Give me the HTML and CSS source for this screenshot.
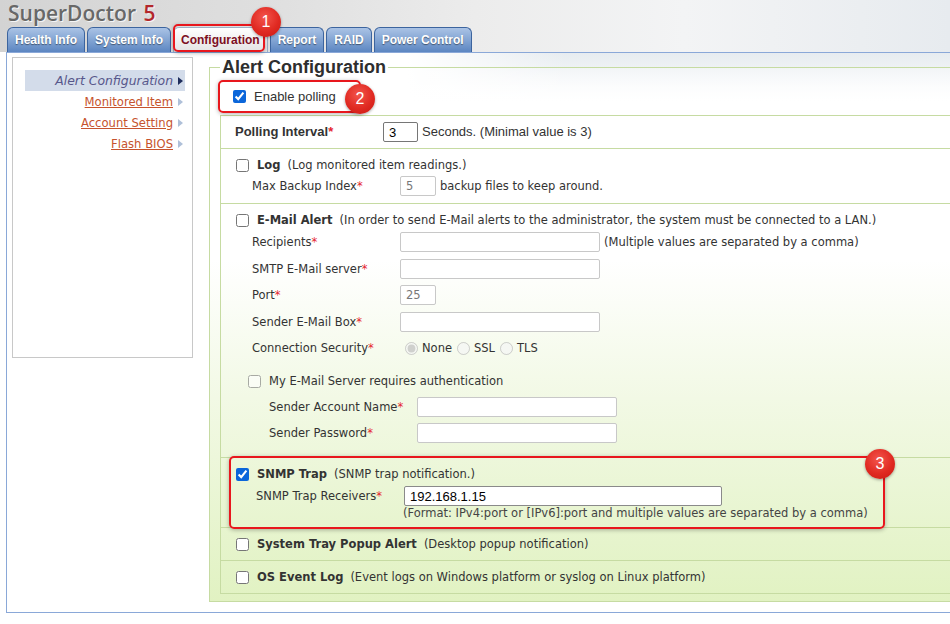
FILE: index.html
```html
<!DOCTYPE html>
<html lang="en">
<head>
    <meta charset="utf-8">
    <title>SuperDoctor 5 - Alert Configuration</title>
    <link rel="stylesheet" href="styles.css">
</head>
<body>
    <header class="top">
        <div class="brand">SuperDoctor <span class="brand-ver">5</span></div>
        <nav class="tabs">
            <a class="tab" href="#">Health Info</a>
            <a class="tab" href="#">System Info</a>
            <a class="tab tab-active" href="#">Configuration
                <span class="callout callout-tab"></span>
                <span class="badge badge-tab">1</span>
            </a>
            <a class="tab" href="#">Report</a>
            <a class="tab" href="#">RAID</a>
            <a class="tab" href="#">Power Control</a>
        </nav>
    </header>

    <div class="frame">
        <aside class="sidebar">
            <ul class="side-menu">
                <li class="side-item side-item-active"><a href="#">Alert Configuration</a><span class="side-arrow"></span></li>
                <li class="side-item"><a href="#">Monitored Item</a><span class="side-arrow"></span></li>
                <li class="side-item"><a href="#">Account Setting</a><span class="side-arrow"></span></li>
                <li class="side-item"><a href="#">Flash BIOS</a><span class="side-arrow"></span></li>
            </ul>
        </aside>

        <div class="panel">
            <fieldset class="alert-config">
                <legend>Alert Configuration</legend>

                <label class="poll-toggle">
                    <input type="checkbox" class="check" checked>
                    <span>Enable polling</span>
                    <span class="callout callout-poll"></span>
                    <span class="badge badge-poll">2</span>
                </label>

                <div class="alert-list">
                    <div class="alert-row poll-row">
                        <span class="field-label">Polling Interval<em class="req">*</em></span>
                        <input type="text" class="text-input poll-input" value="3">
                        <span class="poll-note">Seconds. (Minimal value is 3)</span>
                    </div>

                    <div class="alert-row">
                        <label class="row-title">
                            <input type="checkbox" class="check">
                            <strong>Log</strong><span class="row-desc">(Log monitored item readings.)</span>
                        </label>
                        <div class="fields fields-log">
                            <span>Max Backup Index<em class="req">*</em></span>
                            <div class="control"><input type="text" class="text-input w-num" value="5"><span>backup files to keep around.</span></div>
                        </div>
                    </div>

                    <div class="alert-row email-row">
                        <label class="row-title">
                            <input type="checkbox" class="check">
                            <strong>E-Mail Alert</strong><span class="row-desc">(In order to send E-Mail alerts to the administrator, the system must be connected to a LAN.)</span>
                        </label>
                        <div class="fields">
                            <span>Recipients<em class="req">*</em></span>
                            <div class="control"><input type="text" class="text-input w-wide"><span>(Multiple values are separated by a comma)</span></div>
                            <span>SMTP E-Mail server<em class="req">*</em></span>
                            <div class="control"><input type="text" class="text-input w-wide"></div>
                            <span>Port<em class="req">*</em></span>
                            <div class="control"><input type="text" class="text-input w-num" value="25"></div>
                            <span>Sender E-Mail Box<em class="req">*</em></span>
                            <div class="control"><input type="text" class="text-input w-wide"></div>
                            <span>Connection Security<em class="req">*</em></span>
                            <div class="control radios">
                                <label class="radio"><input type="radio" name="sec" disabled checked>None</label>
                                <label class="radio"><input type="radio" name="sec" disabled>SSL</label>
                                <label class="radio"><input type="radio" name="sec" disabled>TLS</label>
                            </div>
                        </div>
                        <label class="auth-title">
                            <input type="checkbox" class="check check-soft">
                            <span>My E-Mail Server requires authentication</span>
                        </label>
                        <div class="fields fields-auth">
                            <span>Sender Account Name<em class="req">*</em></span>
                            <div class="control"><input type="text" class="text-input w-wide"></div>
                            <span>Sender Password<em class="req">*</em></span>
                            <div class="control"><input type="password" class="text-input w-wide"></div>
                        </div>
                    </div>

                    <div class="alert-row snmp-row">
                        <label class="row-title">
                            <input type="checkbox" class="check" checked>
                            <strong>SNMP Trap</strong><span class="row-desc">(SNMP trap notification.)</span>
                        </label>
                        <div class="fields fields-snmp">
                            <span>SNMP Trap Receivers<em class="req">*</em></span>
                            <div class="control"><input type="text" class="text-input snmp-input" value="192.168.1.15"></div>
                            <span></span>
                            <div class="snmp-note">(Format: IPv4:port or [IPv6]:port and multiple values are separated by a comma)</div>
                        </div>
                        <span class="callout callout-snmp"></span>
                        <span class="badge badge-snmp">3</span>
                    </div>

                    <div class="alert-row">
                        <label class="row-title">
                            <input type="checkbox" class="check">
                            <strong>System Tray Popup Alert</strong><span class="row-desc">(Desktop popup notification)</span>
                        </label>
                    </div>

                    <div class="alert-row">
                        <label class="row-title">
                            <input type="checkbox" class="check">
                            <strong>OS Event Log</strong><span class="row-desc">(Event logs on Windows platform or syslog on Linux platform)</span>
                        </label>
                    </div>
                </div>
            </fieldset>
        </div>
    </div>
</body>
</html>
```

FILE: styles.css
```css
body {
    margin: 0;
    background: #fff;
    color: #333;
    font-family: "DejaVu Sans", sans-serif;
    font-size: 11.5px;
    line-height: 18px;
    overflow: hidden;
}
.top {
    height: 52px;
    background: linear-gradient(90deg, #d3d3d3 0%, #e0e0e0 30%, #ececec 50%, #f3f4f5 72%, #e7ebef 100%);
}
.brand {
    height: 27px;
    padding-left: 8px;
    font-family: "Open Sans", sans-serif;
    font-size: 21px;
    font-weight: 600;
    line-height: 27px;
    color: #686868;
    text-shadow: 1px 1px 0 rgba(255, 255, 255, 0.8);
}
.brand-ver {
    color: #b3272b;
    margin-left: 2px;
}
.tabs {
    display: flex;
    align-items: flex-end;
    gap: 2px;
    height: 25px;
    padding-left: 7px;
}
.tab {
    position: relative;
    height: 25px;
    box-sizing: border-box;
    padding: 0 7px;
    border: 1px solid #3c649e;
    border-bottom: none;
    border-radius: 6px 6px 0 0;
    background: linear-gradient(#aac3e5, #5c86c1);
    color: #fff;
    font: bold 12px/24px "Liberation Sans", sans-serif;
    text-decoration: none;
    text-shadow: 0 1px 1px rgba(0, 0, 0, 0.45);
}
.tab-active {
    background: linear-gradient(#ffffff, #e3e3e3);
    border-color: #9fb0c6;
    color: #7d0f1f;
    text-shadow: none;
}

/* red annotation marks */
.callout {
    position: absolute;
    box-sizing: border-box;
    border: 2px solid #e8171d;
    border-radius: 5px;
    box-shadow: 0 1px 4px rgba(0, 0, 0, 0.3);
    pointer-events: none;
}
.badge {
    position: absolute;
    z-index: 2;
    width: 30px;
    height: 30px;
    border-radius: 50%;
    background: radial-gradient(circle at 45% 35%, #f3554c 0%, #e02a22 55%, #c81812 100%);
    box-shadow: 0 1px 3px rgba(0, 0, 0, 0.35);
    color: #fff;
    font: 16px/30px "Liberation Sans", sans-serif;
    text-align: center;
    text-shadow: none;
    font-weight: normal;
    font-style: normal;
}
.callout-tab { left: -1px; top: -4px; width: 92px; height: 28px; }
.badge-tab { left: 77px; top: -21px; }
.callout-poll { left: -2px; top: 2px; width: 143px; height: 33px; }
.badge-poll { left: 125px; top: 6px; }
.callout-snmp { left: 8px; top: -2px; width: 656px; height: 73px; }
.badge-snmp { left: 644px; top: -9px; }

.frame {
    display: flex;
    align-items: flex-start;
    height: 559px;
    margin-left: 6px;
    border: 1px solid #8aa8d8;
    border-right: none;
    overflow: hidden;
    background:
        linear-gradient(90deg, #fff 400px, rgba(255, 255, 255, 0) 560px),
        linear-gradient(180deg, #e7ecf0 0, #fff 48px);
}
.sidebar {
    width: 181px;
    height: 301px;
    box-sizing: border-box;
    margin: 4px 0 0 5px;
    padding: 12px 7px 0 12px;
    border: 1px solid #c8c8c8;
    background: #fff;
}
.side-menu {
    list-style: none;
    margin: 0;
    padding: 0;
}
.side-item {
    display: flex;
    align-items: center;
    justify-content: flex-end;
    height: 21px;
    padding-right: 2px;
}
.side-item a {
    color: #c6532d;
    font-size: 11.6px;
}
.side-item-active {
    background: #d3dcea;
}
.side-item-active a {
    color: #57578a;
    font-size: 12.4px;
    font-style: italic;
    text-decoration: none;
}
.side-arrow {
    width: 0;
    height: 0;
    margin-left: 5px;
    border-left: 5px solid #afc0d9;
    border-top: 4px solid transparent;
    border-bottom: 4px solid transparent;
}
.side-item-active .side-arrow {
    border-left-color: #1e2d5c;
}

.panel {
    flex: 1;
    margin: 4px -40px 0 16px;
}
.alert-config {
    margin: 0;
    padding: 0 0 7px 10px;
    border: 1px solid #c6dba2;
    background: linear-gradient(rgba(255, 255, 255, 0.2) 0, #fff 45px, #fff 36%, #f2f9e5 62%, #e1f2c2 100%);
}
.alert-config legend {
    padding: 0 2px;
    color: #2e2e2e;
    font: bold 18px/21px "Liberation Sans", sans-serif;
}
.poll-toggle {
    position: relative;
    display: flex;
    align-items: center;
    gap: 8px;
    width: 140px;
    height: 37px;
    padding-left: 13px;
    box-sizing: border-box;
    font: 13px "Liberation Sans", sans-serif;
}
.check {
    width: 13px;
    height: 13px;
    margin: 0;
    accent-color: #0b66da;
}
.alert-list {
    border-top: 1px solid #c6dba2;
    border-left: 1px solid #c6dba2;
}
.alert-row {
    position: relative;
    padding: 7px 0 7px 15px;
    border-bottom: 1px solid #c6dba2;
}
.poll-row {
    display: flex;
    align-items: center;
    padding: 6px 0 6px 14px;
    font: 13px/18px "Liberation Sans", sans-serif;
}
.poll-row .field-label {
    width: 148px;
    font-weight: bold;
}
.poll-note {
    margin-left: 4px;
}
.req {
    color: #e5262f;
    font-style: normal;
}
.row-title {
    display: flex;
    align-items: center;
    gap: 8px;
    height: 18px;
}
.row-desc {
    margin-left: -1px;
}
.fields {
    display: grid;
    grid-template-columns: 148px auto;
    align-items: center;
    row-gap: 6.5px;
    margin: 3px 0 0 16px;
}
.fields-log {
    margin-top: 2px;
}
.control {
    display: flex;
    align-items: center;
    gap: 4px;
    min-height: 20px;
}
.text-input {
    height: 20px;
    box-sizing: border-box;
    margin: 0;
    padding: 0 5px;
    border: 1px solid #c8c8c8;
    border-radius: 2px;
    background: #fff;
    color: #777;
    font: 11.5px "DejaVu Sans", sans-serif;
}
.w-wide { width: 200px; }
.w-num { width: 36px; }
.poll-input {
    width: 35px;
    border-color: #767676;
    color: #000;
    font: 13px "Liberation Sans", sans-serif;
}
.snmp-input {
    width: 318px;
    border-color: #8a8a8a;
    color: #000;
    font: 13px "Liberation Sans", sans-serif;
}
.radios {
    gap: 0;
}
.radio {
    display: flex;
    align-items: center;
}
.radio input {
    width: 13px;
    height: 13px;
    margin: 0 4px 0 5px;
}
.email-row {
    padding-bottom: 14px;
}
.auth-title {
    display: flex;
    align-items: center;
    gap: 8px;
    height: 18px;
    margin: 14px 0 0 12px;
}
.check-soft {
    opacity: 0.6;
}
.fields-auth {
    row-gap: 6px;
    margin: 7px 0 0 33px;
}
.snmp-row {
    padding-bottom: 5px;
}
.fields-snmp {
    row-gap: 0;
    margin-left: 20px;
}
.snmp-note {
    margin: -2px 0 0 -1px;
    color: #444;
}
```
